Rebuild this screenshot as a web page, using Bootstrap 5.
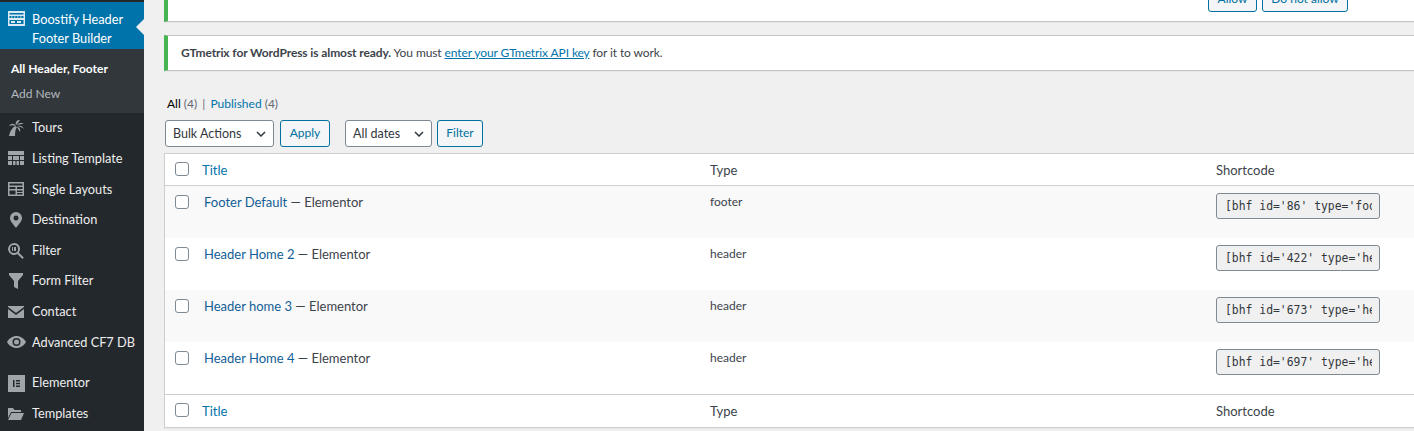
<!DOCTYPE html>
<html lang="en">
<head>
<meta charset="utf-8">
<title>Boostify Header Footer Builder</title>
<link rel="stylesheet" href="https://cdn.jsdelivr.net/npm/bootstrap@5.3.0/dist/css/bootstrap.min.css">
<style>
html,body{height:431px;overflow:hidden;background:#f0f0f1}
body{font-family:Lato,"Open Sans","Liberation Sans",sans-serif;font-size:13px;line-height:1.4;color:#3c434a}
a{color:#135e96;text-decoration:none}
.wp-shell{height:431px;overflow:hidden}
.wp-side{width:144px;flex:none;background:#23282d;color:#eee;height:431px;padding-top:2px}
.wp-cur{position:relative;background:#0073aa;color:#fff;height:47px;padding:8px 6px 0 32px;line-height:18.5px;font-size:12.75px}
.wp-cur::after{content:"";position:absolute;right:0;top:17px;border:8px solid transparent;border-right-color:#f0f0f1;border-left:0}
.wp-cur svg{position:absolute;left:8px;top:8px}
.wp-sub{background:#32373c;height:64px;padding-top:9px;font-size:12px}
.wp-sub div{padding:0 11px;height:25px;line-height:22px;color:#b4b9be}
.wp-sub .on{color:#fff;font-weight:700}
.wp-item{display:flex;align-items:center;height:30.6px;color:#eee;font-size:12.75px}
.wp-ico{width:32px;flex:none;display:flex;justify-content:center;color:#a0a5aa}
.wp-sep{height:10px}
.wp-main{flex:1;min-width:0;padding-left:20px}
.wp-notice{background:#fff;border:1px solid #c3c4c7;border-left:4px solid #46b450;border-right:0;box-shadow:0 1px 1px rgba(0,0,0,.04)}
.wp-n1{height:22px;border-top:0;display:flex;justify-content:flex-end;padding-right:66px;position:relative}
.wp-n1 .ghost{position:absolute;left:13px;top:-16px;color:#3c434a;white-space:nowrap;font-size:13px}
.wp-minibtn{height:26px;margin-top:-14px;border:1px solid #0071a1;border-radius:3px;background:#f3f5f6;color:#0071a1;font-size:12px;line-height:24px;margin-left:5px;text-align:center}
.wp-n2{height:36px;margin-top:13px;display:flex;align-items:center;padding-left:13px;font-size:12px;letter-spacing:-.1px}
.wp-n2 b{font-weight:700}
.wp-n2 a{color:#0073aa;text-decoration:underline}
.wp-views{margin-top:23px;font-size:12px;height:20px;line-height:20px;padding-left:3px;color:#646970}
.wp-views b{font-weight:400;color:#000}
.wp-views a{color:#0073aa}
.wp-views i{font-style:normal;margin:0 2px}
.wp-bar{display:flex;margin-top:6px;height:27px;padding-left:1px}
.wp-fake{height:27px;border:1px solid #7e8993;border-radius:3px;background:#fff;color:#32373c;display:flex;align-items:center;justify-content:space-between;padding:0 7px;font-size:12.5px}
.wp-btn{height:27px;border:1px solid #0071a1;border-radius:3px;background:#f3f5f6;color:#0071a1;font-size:12px;display:flex;align-items:center;justify-content:center}
.wp-table{margin-top:6px;background:#fff;border:1px solid #ccd0d4;border-right:0;box-shadow:0 1px 1px rgba(0,0,0,.04)}
.wp-row{display:flex}
.wp-c1{width:38px;flex:none;padding-left:10px}
.wp-c2{width:507px;flex:none}
.wp-c3{width:506px;flex:none}
.wp-box{width:14px;height:14px;border:1px solid #7e8993;border-radius:3px;background:#fff;display:block}
.wp-head{height:32px;align-items:center;font-size:13px}
.wp-head a{color:#0073aa;margin-left:-1px}
.wp-head>div{position:relative;top:1px}
.wp-head .wp-c1{top:-1px}
.wp-top{border-bottom:1px solid #ccd0d4}
.wp-bot{border-top:1px solid #ccd0d4;height:33px}
.wp-bot>div{top:0}
.wp-body{height:52px;padding-top:8px;font-size:13px}
.wp-body.alt{background:#f9f9f9}
.wp-body .wp-box{margin-top:1px}
.wp-body .wp-c2{padding-left:1px;line-height:16px}
.wp-body a{color:#135e96}
.wp-body .wp-c3{font-size:12px;line-height:16px}
.wp-code{width:164px;height:26px;margin:-1px 0 0;border:1px solid #7e8993;border-radius:3px;background:#f0f0f1;font-family:"DejaVu Sans Mono","Liberation Mono",monospace;font-size:11.4px;color:#32373c;line-height:24px;padding:0 7px 0 8px}
.wp-code span{display:block;overflow:hidden;white-space:nowrap}
</style>
</head>
<body>
<div class="wp-shell d-flex">
<nav class="wp-side">
  <div class="wp-cur">
    <svg width="17" height="17" viewBox="0 0 17 17" fill="#fff" opacity=".85"><path d="M0 1h17v15H0z M1.500 3v1.500h14V3z M1.500 6v2h14V6z M1.500 10v4h14v-4z" fill-rule="evenodd"/><path d="M3 6.500h1.500v1H3zM6 6.500h1.500v1H6zM9 6.500h1.500v1H9zM12 6.500h1.500v1H12zM3 11h4v2H3zM9 11h4v2H9z"/></svg>
    Boostify Header Footer Builder
  </div>
  <div class="wp-sub"><div class="on">All Header, Footer</div><div>Add New</div></div>
  <div class="wp-item"><span class="wp-ico"><svg width="17" height="16" viewBox="0 0 17 16" fill="currentColor"><path d="M1 16C2 11 4 8 7 6l2 1C7.500 9 7 12 7 16z"/><path d="M8 6C6 3 3 3 1 6c2-1 4-1 7 0zM8 5C7 2 9 0 12 0c-1 1-2 3-4 5zM9 5c1-2 4-3 7-1-2 0-4 0-7 1zM9 6c3-1 6 0 7 3-2-2-4-2-7-3zM9 7c2 0 4 2 3 5-1-2-2-3-3-5z"/></svg></span>Tours</div>
  <div class="wp-item"><span class="wp-ico"><svg width="16" height="15" viewBox="0 0 16 15" fill="currentColor"><path d="M0 0h16v4H0zM0 5h4v4H0zM5 5h6v4H5zM12 5h4v4h-4zM0 10h4v4H0zM5 10h2.500v4H5zM8.500 10H11v4H8.500zM12 10h4v4h-4z"/></svg></span>Listing Template</div>
  <div class="wp-item"><span class="wp-ico"><svg width="16" height="15" viewBox="0 0 16 15" fill="currentColor"><path fill-rule="evenodd" d="M0 0h16v14H0zM1.500 1.500v2h13v-2zM1.500 5v2h6V5zM9 5v2h5.500V5zM1.500 8.500v4h6v-4zM9 8.500v1.500h5.500V8.500zM9 11v1.500h5.500V11z"/></svg></span>Single Layouts</div>
  <div class="wp-item"><span class="wp-ico"><svg width="12" height="16" viewBox="0 0 12 16" fill="currentColor"><path fill-rule="evenodd" d="M6 0a6 6 0 0 1 6 6c0 3-3 6-6 10C3 12 0 9 0 6a6 6 0 0 1 6-6zm0 3.500a2.500 2.500 0 1 0 0 5 2.500 2.500 0 0 0 0-5z"/></svg></span>Destination</div>
  <div class="wp-item"><span class="wp-ico"><svg width="16" height="16" viewBox="0 0 16 16" fill="currentColor"><path fill-rule="evenodd" d="M6 0a6 6 0 0 1 4.800 9.600l5 5-1.400 1.400-5-5A6 6 0 1 1 6 0zm0 2a4 4 0 1 0 0 8 4 4 0 0 0 0-8z"/><path d="M4 4h1v4H4zM6 4h2v4H6z"/></svg></span>Filter</div>
  <div class="wp-item"><span class="wp-ico"><svg width="14" height="16" viewBox="0 0 14 16" fill="currentColor"><path d="M0 0h14v2L9 8v8l-4-2V8L0 2z"/></svg></span>Form Filter</div>
  <div class="wp-item"><span class="wp-ico"><svg width="16" height="12" viewBox="0 0 16 12" fill="currentColor"><path d="M0 0h16v1L8 7 0 1zM0 3l8 6 8-6v9H0z"/></svg></span>Contact</div>
  <div class="wp-item"><span class="wp-ico"><svg width="19" height="12" viewBox="0 0 19 12" fill="currentColor"><path fill-rule="evenodd" d="M9.500 0c4 0 7.500 2.500 9.500 6-2 3.500-5.500 6-9.500 6S2 9.500 0 6c2-3.500 5.500-6 9.500-6zm0 2a4 4 0 1 0 0 8 4 4 0 0 0 0-8z"/><circle cx="9.500" cy="6" r="2.500"/></svg></span>Advanced CF7 DB</div>
  <div class="wp-sep"></div>
  <div class="wp-item"><span class="wp-ico"><svg width="17" height="17" viewBox="0 0 17 17" fill="currentColor"><path fill-rule="evenodd" d="M0 0h17v17H0zM5 5v7h1.500V5zM8 5v1.500h4V5zM8 7.800v1.400h4V7.800zM8 10.500V12h4v-1.500z"/></svg></span>Elementor</div>
  <div class="wp-item"><span class="wp-ico"><svg width="16" height="13" viewBox="0 0 16 13" fill="currentColor"><path d="M0 1h5l1.500 2H13v2H3L0 11zM3.500 6H16l-3 7H0z"/></svg></span>Templates</div>
</nav>
<main class="wp-main">
  <!-- The first notice's sentence is clipped to illegible descenders in the reference; the wording below is a placeholder, not a transcription. The "Allow" label is legible only in part, and "Do not allow" is inferred from its clipped glyphs. -->
  <div class="wp-notice wp-n1"><span class="ghost">We'd like to gather usage data, plugin settings, and site configuration to help us improve this plugin and provide better support.</span><span class="wp-minibtn" style="width:49px">Allow</span><span class="wp-minibtn" style="width:86px">Do not allow</span></div>
  <div class="wp-notice wp-n2"><span><b>GTmetrix for WordPress is almost ready.</b> You must <a href="#">enter your GTmetrix API key</a> for it to work.</span></div>
  <div class="wp-views"><b>All</b> (4) <i>|</i> <a href="#">Published</a> (4)</div>
  <div class="wp-bar">
    <div class="wp-fake" style="width:109px"><span>Bulk Actions</span><svg width="10" height="6" viewBox="0 0 10 6"><path d="M1 1l4 4 4-4" fill="none" stroke="#32373c" stroke-width="1.500"/></svg></div>
    <div class="wp-btn" style="width:50px;margin-left:6px">Apply</div>
    <div class="wp-fake" style="width:87px;margin-left:15px"><span>All dates</span><svg width="10" height="6" viewBox="0 0 10 6"><path d="M1 1l4 4 4-4" fill="none" stroke="#32373c" stroke-width="1.500"/></svg></div>
    <div class="wp-btn" style="width:46px;margin-left:5px">Filter</div>
  </div>
  <div class="wp-table">
    <div class="wp-row wp-head wp-top"><div class="wp-c1"><span class="wp-box"></span></div><div class="wp-c2"><a href="#">Title</a></div><div class="wp-c3">Type</div><div>Shortcode</div></div>
    <div class="wp-row wp-body alt"><div class="wp-c1"><span class="wp-box"></span></div><div class="wp-c2"><a href="#">Footer Default</a> — Elementor</div><div class="wp-c3">footer</div><div class="wp-code"><span>[bhf id='86' type='footer']</span></div></div>
    <div class="wp-row wp-body"><div class="wp-c1"><span class="wp-box"></span></div><div class="wp-c2"><a href="#">Header Home 2</a> — Elementor</div><div class="wp-c3">header</div><div class="wp-code"><span>[bhf id='422' type='header']</span></div></div>
    <div class="wp-row wp-body alt"><div class="wp-c1"><span class="wp-box"></span></div><div class="wp-c2"><a href="#">Header home 3</a> — Elementor</div><div class="wp-c3">header</div><div class="wp-code"><span>[bhf id='673' type='header']</span></div></div>
    <div class="wp-row wp-body"><div class="wp-c1"><span class="wp-box"></span></div><div class="wp-c2"><a href="#">Header Home 4</a> — Elementor</div><div class="wp-c3">header</div><div class="wp-code"><span>[bhf id='697' type='header']</span></div></div>
    <div class="wp-row wp-head wp-bot"><div class="wp-c1"><span class="wp-box"></span></div><div class="wp-c2"><a href="#">Title</a></div><div class="wp-c3">Type</div><div>Shortcode</div></div>
  </div>
</main>
</div>
<script src="https://cdn.jsdelivr.net/npm/bootstrap@5.3.0/dist/js/bootstrap.bundle.min.js"></script>
</body>
</html>
